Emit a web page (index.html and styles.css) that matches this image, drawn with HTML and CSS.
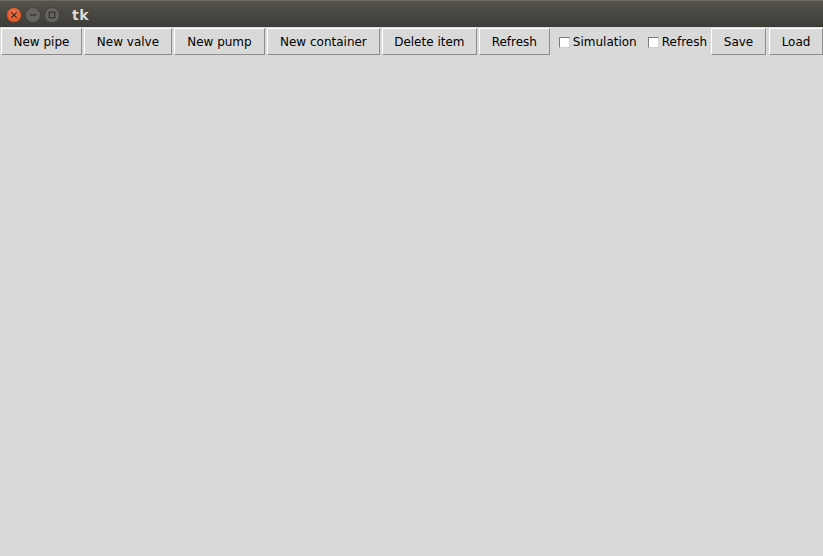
FILE: index.html
```html
<!DOCTYPE html>
<html>
<head>
<meta charset="utf-8">
<link rel="stylesheet" href="styles.css">
</head>
<body>
<div class="window">
  <div class="titlebar">
    <div class="controls">
      <svg class="ctl" width="16" height="16" viewBox="0 0 16 16">
        <defs>
          <radialGradient id="rg" cx="50%" cy="40%" r="60%">
            <stop offset="0" stop-color="#f27e58"/>
            <stop offset="1" stop-color="#d9501f"/>
          </radialGradient>
        </defs>
        <circle cx="8" cy="8" r="7.5" fill="url(#rg)" stroke="#3a3833" stroke-width="0.6"/>
        <path d="M5.6 5.6 L10.4 10.4 M10.4 5.6 L5.6 10.4" stroke="#3b2a24" stroke-width="1.3" stroke-linecap="round"/>
      </svg>
      <svg class="ctl" width="16" height="16" viewBox="0 0 16 16">
        <circle cx="8" cy="8" r="7.5" fill="#66645e" stroke="#3a3833" stroke-width="0.6"/>
        <path d="M4.8 8 H11.2" stroke="#34332f" stroke-width="1.3"/>
      </svg>
      <svg class="ctl" width="16" height="16" viewBox="0 0 16 16">
        <circle cx="8" cy="8" r="7.5" fill="#66645e" stroke="#3a3833" stroke-width="0.6"/>
        <rect x="5.2" y="5.2" width="5.6" height="5.6" fill="none" stroke="#34332f" stroke-width="1.2"/>
      </svg>
    </div>
    <span class="title">tk</span>
  </div>
  <div class="toolbar">
    <button class="btn w-pipe">New pipe</button>
    <button class="btn w-valve">New valve</button>
    <button class="btn w-pump">New pump</button>
    <button class="btn w-cont">New container</button>
    <button class="btn w-del">Delete item</button>
    <button class="btn w-ref">Refresh</button>
    <label class="check c-sim"><span class="box"></span><span class="lbl">Simulation</span></label>
    <label class="check c-ref"><span class="box"></span><span class="lbl">Refresh</span></label>
    <button class="btn w-save">Save</button>
    <button class="btn w-load">Load</button>
  </div>
  <div class="canvas"></div>
</div>
</body>
</html>
```
FILE: styles.css
```css
html, body {
  margin: 0;
  padding: 0;
  background: #d9d9d9;
  font-family: "DejaVu Sans", "Liberation Sans", sans-serif;
}
.window {
  width: 823px;
  height: 556px;
  display: flex;
  flex-direction: column;
  background: #d9d9d9;
  overflow: hidden;
}
.titlebar {
  height: 27px;
  flex: none;
  display: flex;
  align-items: center;
  background: linear-gradient(#57544d, #4a4842 40%, #3d3c38);
  border-top: 1px solid #6b6860;
  box-sizing: border-box;
}
.controls {
  display: flex;
  gap: 3px;
  margin-left: 6px;
  margin-top: 1px;
}
.ctl {
  display: block;
}
.title {
  margin-left: 12px;
  color: #dfdbd2;
  font-weight: bold;
  font-size: 14px;
  letter-spacing: 0.5px;
  margin-top: 1px;
}
.toolbar {
  display: flex;
  align-items: center;
  height: 29px;
  flex: none;
}
.btn {
  box-sizing: border-box;
  height: 27px;
  margin: 1px 0;
  padding: 1px 0 0 0;
  background: #d9d9d9;
  border: 1px solid;
  border-color: #ffffff #8c8c8c #8c8c8c #ffffff;
  border-radius: 0;
  font-family: "DejaVu Sans", "Liberation Sans", sans-serif;
  font-size: 12px;
  color: #000;
  text-align: center;
  line-height: 24px;
}
.w-pipe { width: 81px; margin-left: 1px; }
.w-valve { width: 88px; margin-left: 2px; }
.w-pump { width: 91px; margin-left: 2px; }
.w-cont { width: 113px; margin-left: 2px; }
.w-del { width: 95px; margin-left: 2px; }
.w-ref { width: 71px; margin-left: 2px; }
.w-save { width: 55px; margin-left: 4px; }
.w-load { width: 54px; margin-left: 3px; }
.check {
  display: flex;
  align-items: center;
  font-size: 12px;
  color: #000;
  height: 27px;
}
.c-sim { margin-left: 9px; }
.c-ref { margin-left: 11px; }
.box {
  box-sizing: border-box;
  width: 11px;
  height: 11px;
  background: #fff;
  border: 1px solid;
  border-color: #7a7a7a #d0d0d0 #d0d0d0 #7a7a7a;
  margin-right: 3px;
  margin-top: 1px;
}
.lbl {
  line-height: 14px;
}
.canvas {
  flex: 1;
  background: #d9d9d9;
}
```
